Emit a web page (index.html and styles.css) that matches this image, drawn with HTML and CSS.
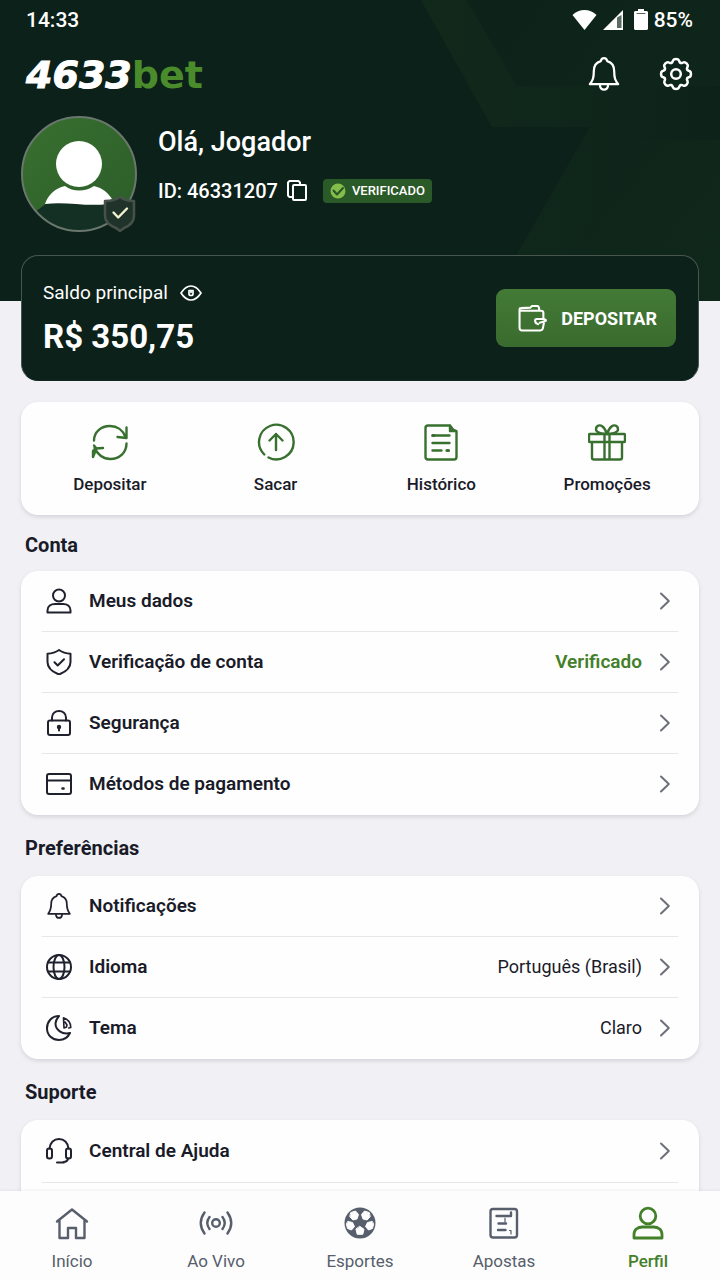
FILE: index.html
```html
<!DOCTYPE html>
<html lang="pt-BR">
<head>
<meta charset="utf-8">
<meta name="viewport" content="width=device-width, initial-scale=1">
<title>4633bet - Perfil</title>
<link rel="stylesheet" href="styles.css">
</head>
<body>
<svg class="sprite" aria-hidden="true">
  <symbol id="user" viewBox="0 0 26 26"><circle cx="13" cy="7.500" r="6"/><path d="M1.500 24.500v-2C1.500 18.200 5 16 9 16h8c4 0 7.500 2.200 7.500 6.500v2z"/></symbol>
  <symbol id="bell" viewBox="0 0 28 30"><path d="M1.500 24h25c-2.700-3.500-3.500-5.500-3.500-11.500 0-5-2.600-7.900-6.200-8.900C16.500 1.800 15.500 1 14 1s-2.500.8-2.800 2.600C7.600 4.600 5 7.500 5 12.500c0 6-.8 8-3.500 11.500zM10.500 25.500c.3 2.200 1.700 3.300 3.500 3.300s3.200-1.100 3.500-3.300"/></symbol>
  <symbol id="chevron" viewBox="0 0 12 18"><path d="M2 1.500 9.800 9 2 16.500"/></symbol>
</svg>

<header class="header">
  <svg class="header-art" viewBox="0 0 720 301" preserveAspectRatio="xMaxYMin slice" aria-hidden="true">
    <defs>
      <linearGradient id="shade" x1="0" y1="0" x2="1" y2="0"><stop offset="0" stop-color="#11291b"/><stop offset="1" stop-color="#0d231a"/></linearGradient>
      <linearGradient id="inner" x1="0" y1="0" x2="1" y2="1"><stop offset="0" stop-color="#0d231a"/><stop offset="1" stop-color="#10271b"/></linearGradient>
    </defs>
    <path fill="url(#shade)" d="M421 0h299v301H490l100-174H492z"/>
    <path fill="url(#inner)" d="M466 0h254v86H517zM636 140h84v161H545z"/>
  </svg>
  <div class="status">
    <span>14:33</span>
    <span class="status-right">
      <svg class="wifi" viewBox="0 0 24 20"><path fill="#fff" d="M0 5C3.500 1.500 7.500 0 12 0s8.500 1.500 12 5L12 20z"/></svg>
      <svg class="signal" viewBox="0 0 20 20"><path fill="#fff" d="M20 0v20H0z"/><path fill="#5b6a62" d="M14 7.500 18.500 5v13H14z"/></svg>
      <svg class="battery" viewBox="0 0 14 21"><path fill="#fff" d="M4 0h6v2h3l1 1v17l-1 1H1l-1-1V3l1-1h3z"/><path stroke="#55645c" stroke-width="1" d="M3 4.500h8"/></svg>
      <span>85%</span>
    </span>
  </div>
  <div class="topbar">
    <a class="logo" href="#">4633<span class="logo-accent">bet</span></a>
    <div class="top-actions">
      <button class="icon-button" type="button" aria-label="Notificações"><svg class="top-bell"><use href="#bell"/></svg></button>
      <button class="icon-button" type="button" aria-label="Configurações">
        <svg class="gear" viewBox="-17 -17 34 34"><defs><path id="tooth" d="M-4.600-11.100C-3.200-11.700-3.500-12.500-3-13.500Q-2.300-15 0-15T3-13.500C3.500-12.500 3.200-11.700 4.600-11.100"/></defs><use href="#tooth"/><use href="#tooth" transform="rotate(45)"/><use href="#tooth" transform="rotate(90)"/><use href="#tooth" transform="rotate(135)"/><use href="#tooth" transform="rotate(180)"/><use href="#tooth" transform="rotate(225)"/><use href="#tooth" transform="rotate(270)"/><use href="#tooth" transform="rotate(315)"/><circle r="4.800"/></svg>
      </button>
    </div>
  </div>
  <div class="profile">
    <div class="avatar">
      <svg viewBox="0 0 116 116" aria-hidden="true">
        <defs><linearGradient id="av" x1="0" y1="0" x2="1" y2="1"><stop offset="0" stop-color="#38702f"/><stop offset="1" stop-color="#2c5c2a"/></linearGradient><clipPath id="disc"><circle cx="58" cy="58" r="57"/></clipPath></defs>
        <circle cx="58" cy="58" r="57" fill="url(#av)"/>
        <path clip-path="url(#disc)" fill="#142f23" d="M14 96 26 87c22-3 45 4 68 0l12 29H10z"/>
        <path fill="#fff" d="M24 88c3-9 10-16 20-18 8 6 20 6 29 0 9 2 14 7 18 13l-4 5c-22 3-42-3-63 0z"/>
        <circle cx="58" cy="48" r="23" fill="#fff"/>
        <circle cx="58" cy="58" r="57" fill="none" stroke="#69776c" stroke-width="2"/>
      </svg>
      <svg class="avatar-badge" viewBox="0 0 34 37" aria-hidden="true"><path fill="#20332b" stroke="#465249" stroke-width="2.500" d="M17 2c4 3 9 4 14 4v15c0 6-5 10-10 12l-4 3-4-3C8 31 2 27 2 21V6c5 0 11-1 15-4z"/><path fill="none" stroke="#f4f3d0" stroke-width="2.400" d="m10.500 17.500 4.700 5L24 13.500"/></svg>
    </div>
    <div class="identity">
      <h1 class="greeting">Olá, Jogador</h1>
      <div class="id-row">
        <span>ID: 46331207</span>
        <button class="icon-button" type="button" aria-label="Copiar ID"><svg class="copy" viewBox="0 0 20 22"><path d="M5.500 17H2.500L1 15.500V2.500L2.500 1h9L13 2.500V4"/><rect x="6" y="5" width="13" height="15" rx="1"/></svg></button>
        <span class="verified"><svg viewBox="0 0 16 16" aria-hidden="true"><circle cx="8" cy="8" r="7.500" fill="#85bd4b"/><path d="m3.500 7.500 3.500 4 6-6.500" fill="none" stroke="#285427" stroke-width="2"/></svg>VERIFICADO</span>
      </div>
    </div>
  </div>
</header>

<main class="content">
  <section class="balance">
    <div>
      <div class="balance-label"><span>Saldo principal</span><button class="icon-button" type="button" aria-label="Ocultar saldo"><svg class="eye" viewBox="0 0 22 16"><path d="M1 8Q5.500 1 11 1t10 7q-4.500 7-10 7T1 8z"/><path d="M9 5.500v3.500q0 1.500 2 1.500t2-1.500V5.500zM11 5.500V7.500"/></svg></button></div>
      <div class="amount">R$ 350,75</div>
    </div>
    <button class="deposit" type="button"><svg viewBox="0 0 28 26" aria-hidden="true"><path d="M24.500 13V7.500Q24.500 5.500 22 5.500H3.500Q1.500 5.500 1.500 4v18Q1.500 24.500 4 24.500h17.500q2.500 0 2.800-3.500L25 17.500M1.500 4Q1.500 3 3 3l9-.5 1.500-1.500H18.500q2 0 2 4"/><path d="M24.500 13.500H18q-1.500 0-1.500 1.500 0 3 3 3.500M24.500 13.500q3.500.8 2 2L21 17"/></svg>DEPOSITAR</button>
  </section>

  <nav class="quick" aria-label="Atalhos">
    <a href="#"><svg viewBox="0 0 38 38"><path d="M3 17.500C3 9 10 3 19 3c7 0 13 4 15.500 11M35.500 4.500v10.500l-9-1M35.500 20.500c0 9-7 15.500-16 15.500C12 36 6 31 3.500 24.500M2 34V28l3-2.500 7-.5M3 22.500l2.500 3L2 34"/></svg><span>Depositar</span></a>
    <a href="#"><svg viewBox="0 0 38 38"><path d="M7.300 31.500A17.300 17.300 0 1 1 11.500 34.500M19 27V11M12.500 17.500 19 11l6.500 6.500"/></svg><span>Sacar</span></a>
    <a href="#"><svg viewBox="0 0 38 38"><path d="M28 2.500H6Q3.500 2.500 3.500 5v29Q3.500 36.500 6 36.500h26q2.500 0 2.500-2.500V8L31 6.500 28 2.500V8h6M10.500 12.500h17M10.500 20h17M10.500 27.500h9"/><path d="M11 12.500h1M25 27.500h1.500" stroke-width="3.200"/></svg><span>Histórico</span></a>
    <a href="#"><svg viewBox="0 0 38 38"><path d="M2 11h34Q37 11 37 12v6q0 1-1 1h-34q-1 0-1-1v-6q0-1 1-1zM4 19v15.500Q4 36.500 6 36.500h26q2 0 2-2V19M16.500 11v25.500M21.500 11v25.500"/><path d="M18 11C14 11 8 9.500 8 6.500 8 2 12 1.500 14.500 3.500 16.500 5 18 8 19 11 20 8 21.500 5 23.500 3.500 26 1.500 30 2 30 6.500 30 9.500 24 11 20 11"/></svg><span>Promoções</span></a>
  </nav>

  <section class="group group-account">
    <h2>Conta</h2>
    <div class="card">
      <a class="row" href="#"><svg class="row-icon"><use href="#user"/></svg><span class="row-title">Meus dados</span><svg class="chevron"><use href="#chevron"/></svg></a>
      <a class="row" href="#"><svg class="row-icon" viewBox="0 0 26 26"><path d="M13 1c3.500 2.500 7 3.500 11.500 3.700V13c0 6-5.500 10.200-11.500 12.500C7 23.200 1.500 19 1.500 13V4.700C6 4.500 9.500 3.500 13 1zM8.500 13.200l3.200 3.300 6.300-6.300"/></svg><span class="row-title">Verificação de conta</span><span class="row-value row-value-ok">Verificado</span><svg class="chevron"><use href="#chevron"/></svg></a>
      <a class="row" href="#"><svg class="row-icon" viewBox="0 0 26 26"><rect x="2" y="10.500" width="22" height="14.500" rx="2"/><path d="M6 10.500V7.500C6 3.500 9.200 1 13 1s7 2.500 7 6.500v3M13 17v3.500"/><circle cx="13" cy="17" r="1.200"/></svg><span class="row-title">Segurança</span><svg class="chevron"><use href="#chevron"/></svg></a>
      <a class="row" href="#"><svg class="row-icon" viewBox="0 0 26 26"><rect x="1" y="3" width="24" height="20" rx="2"/><path d="M1.500 9.500h23"/><path stroke-width="2.500" d="M16.500 17.500h1"/></svg><span class="row-title">Métodos de pagamento</span><svg class="chevron"><use href="#chevron"/></svg></a>
    </div>
  </section>

  <section class="group">
    <h2>Preferências</h2>
    <div class="card">
      <a class="row" href="#"><svg class="row-icon"><use href="#bell"/></svg><span class="row-title">Notificações</span><svg class="chevron"><use href="#chevron"/></svg></a>
      <a class="row" href="#"><svg class="row-icon" viewBox="0 0 26 26"><circle cx="13" cy="13" r="12"/><ellipse cx="13" cy="13" rx="5.500" ry="12"/><path d="M2 8.500h22M2 17.500h22"/></svg><span class="row-title">Idioma</span><span class="row-value">Português (Brasil)</span><svg class="chevron"><use href="#chevron"/></svg></a>
      <a class="row" href="#"><svg class="row-icon" viewBox="0 0 26 26"><path d="M13 1C5.500 1 1 7 1 13.200 1 20.200 6.500 25 13 25c5 0 9-2.800 11-7C16 19.800 9.500 15 9.500 8.500 9.500 5 11.500 2.800 13 1z"/><path stroke-width="1.600" d="M17.500 2.800c4.300 1.500 7.300 5 7.300 9.700l-2 .5M17.500 3l.5 10 2.500-1 .5-2-2-3"/></svg><span class="row-title">Tema</span><span class="row-value">Claro</span><svg class="chevron"><use href="#chevron"/></svg></a>
    </div>
  </section>

  <section class="group">
    <h2>Suporte</h2>
    <div class="card card-support">
      <a class="row" href="#"><svg class="row-icon" viewBox="0 0 26 26"><path d="M3.500 10.500C4 4.500 8 1 13 1s9 3.500 9.500 9.500M22 20.500c-.5 2.500-2 3.500-4.500 3.500M11 24.400h7"/><rect x="1" y="10.500" width="5" height="10" rx="2.200"/><rect x="20" y="10.500" width="5" height="10" rx="2.200"/></svg><span class="row-title">Central de Ajuda</span><svg class="chevron"><use href="#chevron"/></svg></a>
    </div>
  </section>
</main>

<nav class="tabs" aria-label="Principal">
  <a href="#"><svg viewBox="0 0 34 34"><path d="M2 15.500 17 3.500l15 12M4.500 14v18H13V22h8v10h8.500V14"/></svg><span>Início</span></a>
  <a href="#"><svg viewBox="0 0 34 34"><circle cx="17" cy="17" r="3.800"/><path d="M10.500 11q-4.500 6 0 12M23.500 11q4.500 6 0 12M5.500 6.500Q-2 17 5.500 27.500M28.500 6.500q7.500 10.500 0 21"/></svg><span>Ao Vivo</span></a>
  <a href="#"><svg viewBox="0 0 34 34"><circle cx="17" cy="17" r="15.500" fill="currentColor" stroke="none"/><g fill="#fdfdfd" stroke="#fdfdfd" stroke-width="1"><path d="m8 6.500 4.500-1.500 3 3.500-1.500 4.500-4 1L7 11zM26 6.500 21.500 5l-3 3.500L20 13l4 1 3-3zM5 15.500l4.500 1 2 4-3 3.500-4-1.500-1-4zM29 15.500l-4.500 1-2 4 3 3.500 4-1.500 1-4zM17 20.500l4 2.800-1.200 5H14.200l-1.200-5z"/></g></svg><span>Esportes</span></a>
  <a href="#"><svg viewBox="0 0 34 34"><rect x="3.500" y="3" width="26.500" height="28.500" rx="2.500"/><path d="M9.500 10h14M11.500 17.500h7.500M11 24h7.500M24 6.500v3.500"/><path stroke-width="1.200" d="M22.500 24.500H24V28M18 12v4"/></svg><span>Apostas</span></a>
  <a class="active" href="#" aria-current="page"><svg viewBox="0 0 34 34"><circle cx="17" cy="10" r="7.800"/><path d="M3 32v-3.500C3 23.500 7 21 11.500 21h11C27 21 31 23.500 31 28.500V32z"/></svg><span>Perfil</span></a>
</nav>
</body>
</html>
```
FILE: styles.css
```css
* { box-sizing: border-box; }

body {
  margin: 0;
  height: 100vh;
  display: flex;
  flex-direction: column;
  overflow: hidden;
  background: #f1f1f5;
  color: #1a1b29;
  font-family: Roboto, "Liberation Sans", sans-serif;
}

a { color: inherit; text-decoration: none; }
button { font: inherit; color: inherit; border: 0; cursor: pointer; }
svg { display: block; flex: none; fill: none; stroke-linejoin: round; stroke-linecap: round; }
h1, h2 { margin: 0; }

.sprite { position: absolute; width: 0; height: 0; }

.icon-button { padding: 0; background: none; stroke: currentColor; }

.header {
  position: relative;
  flex: none;
  padding: 0 27px 69px 26px;
  background: #0c211a;
  color: #fff;
}
.header-art { position: absolute; inset: 0; width: 100%; height: 100%; }
.status, .topbar, .profile { position: relative; display: flex; align-items: center; }

.status { justify-content: space-between; height: 39px; font-size: 21px; font-weight: 500; }
.status-right { display: flex; align-items: center; gap: 6px; }
.wifi { width: 25px; height: 20px; }
.signal { width: 20px; height: 20px; }
.battery { width: 14px; height: 21px; margin-left: 5px; }

.topbar { justify-content: space-between; height: 40px; margin-top: 15px; }
.logo {
  padding-top: 2px;
  font: italic bold 38px/40px "DejaVu Sans", sans-serif;
  -webkit-text-stroke: 1px currentColor;
}
.logo-accent { color: #4a8c2b; font-style: normal; -webkit-text-stroke: 0; }
.top-actions { display: flex; align-items: center; gap: 39px; }
.top-bell { width: 32px; height: 34px; stroke-width: 2; }
.gear { width: 34px; height: 34px; stroke-width: 2.5; }

.profile { gap: 21px; margin: 22px 0 0 -5px; }
.avatar { position: relative; width: 116px; }
.avatar-badge { position: absolute; right: 0; bottom: 0; width: 34px; height: 37px; }
.identity { display: flex; flex-direction: column; gap: 21px; padding-bottom: 20px; }
.greeting { font-size: 27px; line-height: 32px; font-weight: 500; }
.id-row { display: flex; align-items: center; gap: 9px; font-size: 20px; line-height: 24px; font-weight: 500; }
.copy { width: 20px; height: 22px; stroke-width: 2; }
.verified {
  display: flex;
  align-items: center;
  gap: 6px;
  height: 24px;
  margin-left: 7px;
  padding: 0 7px;
  border-radius: 4px;
  background: #2b5a29;
  font-size: 13px;
}
.verified svg { width: 16px; height: 16px; }

.content {
  position: relative;
  flex: 1;
  min-height: 0;
  margin-top: -46px;
  padding: 0 21px;
  overflow: hidden auto;
  scrollbar-width: none;
}

.balance {
  display: flex;
  align-items: center;
  justify-content: space-between;
  height: 126px;
  padding: 0 22px 0 21px;
  border: 1px solid #47564f;
  border-bottom-color: #14291f;
  border-radius: 17px;
  background: #0c211a;
  color: #fff;
}
.balance-label { display: flex; align-items: center; gap: 12px; padding-top: 2px; font-size: 19px; line-height: 24px; }
.eye { width: 22px; height: 16px; stroke-width: 1.7; }
.amount { margin-top: 12px; font-size: 33px; line-height: 40px; font-weight: 700; }
.deposit {
  display: flex;
  align-items: center;
  gap: 14px;
  height: 58px;
  padding: 0 19px 0 22px;
  border-radius: 9px;
  background: linear-gradient(#437a36, #3a6b2e);
  font-size: 18px;
  font-weight: 700;
}
.deposit svg { width: 29px; height: 27px; stroke: currentColor; stroke-width: 2; }

.quick, .card {
  border-radius: 17px;
  background: #fefefe;
  box-shadow: 0 2px 4px rgb(30 30 60 / 14%);
}
.quick {
  display: grid;
  grid-template-columns: repeat(4, 1fr);
  margin-top: 21px;
  padding: 21px 9px 20px 6px;
  font-size: 17px;
  line-height: 22px;
  font-weight: 500;
}
.quick a { display: flex; flex-direction: column; align-items: center; gap: 12px; }
.quick svg { width: 38px; height: 38px; stroke: #38702f; stroke-width: 2.4; }

.group h2 { margin: 21px 0 16px 4px; font-size: 20px; line-height: 24px; font-weight: 700; }
.group-account h2 { margin: 18px 0 14px 4px; }
.card { padding: 0 21px; }
.row {
  display: flex;
  align-items: center;
  min-height: 61px;
  padding-right: 7px;
  border-bottom: 1px solid #e6e6eb;
  font-size: 19px;
  line-height: 24px;
}
.row:last-child { border-bottom-color: transparent; }
.row-icon { width: 26px; height: 26px; margin: 0 17px 0 4px; stroke: #20212e; stroke-width: 2; }
.row-title { flex: 1; font-weight: 600; }
.row-value { margin-right: 17px; font-size: 18px; }
.row-value-ok { color: #438029; font-size: 19px; font-weight: 600; }
.chevron { width: 12px; height: 18px; stroke: #6d707a; stroke-width: 2; }
.card-support { padding-bottom: 62px; }
.card-support .row { min-height: 63px; }
.card-support .row:last-child { border-bottom-color: #e6e6eb; }

.tabs {
  position: relative;
  flex: none;
  display: grid;
  grid-template-columns: repeat(5, 1fr);
  height: 89px;
  padding-top: 15px;
  background: #fdfdfd;
  box-shadow: 0 -1px 3px rgb(30 30 60 / 6%);
  color: #575e6c;
  font-size: 17px;
  line-height: 22px;
}
.tabs a { display: flex; flex-direction: column; align-items: center; gap: 10px; }
.tabs svg { width: 34px; height: 34px; stroke: currentColor; stroke-width: 2.4; }
.tabs .active { color: #438029; font-weight: 500; }
.tabs .active svg { stroke-width: 2.8; }
```
